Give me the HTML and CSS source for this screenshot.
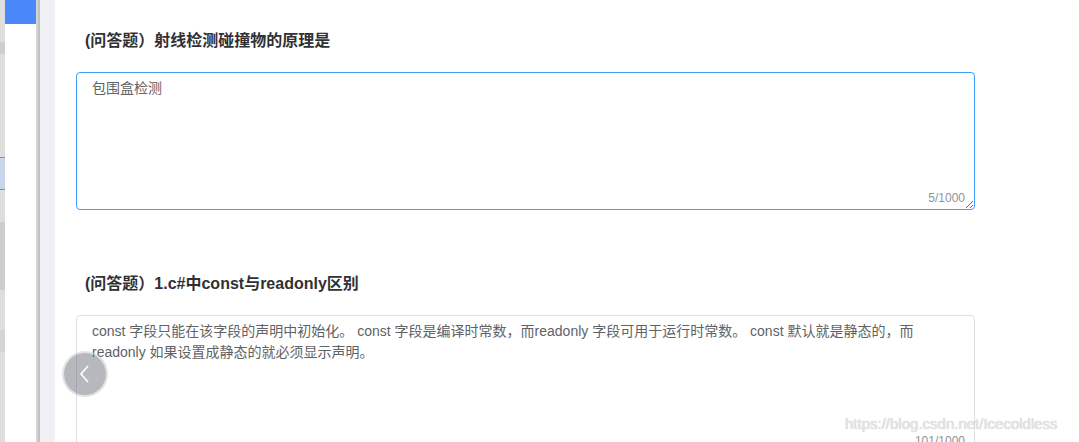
FILE: index.html
```html
<!DOCTYPE html>
<html lang="zh-CN">
<head>
<meta charset="utf-8">
<title>问答题</title>
<link rel="stylesheet" href="styles.css">
</head>
<body>
  <div class="bg-strip">
    <div class="band band-a"></div>
    <div class="band band-b"></div>
    <div class="band band-c"></div>
    <div class="band band-d"></div>
  </div>
  <div class="side"><div class="side-head"></div></div>
  <div class="shade"></div>
  <div class="gutter"></div>
  <main class="main">
    <section class="question">
      <div class="q-title">(问答题）射线检测碰撞物的原理是</div>
      <div class="textarea-wrap">
        <textarea class="answer is-focus">包围盒检测</textarea>
        <span class="count">5/1000</span>
      </div>
    </section>
    <section class="question next">
      <div class="q-title">(问答题）1.c#中const与readonly区别</div>
      <div class="textarea-wrap">
        <textarea class="answer">const 字段只能在该字段的声明中初始化。 const 字段是编译时常数，而readonly 字段可用于运行时常数。 const 默认就是静态的，而readonly 如果设置成静态的就必须显示声明。</textarea>
        <span class="count">101/1000</span>
      </div>
    </section>
    <button class="prev-btn" type="button" aria-label="上一题">
      <svg width="14" height="20" viewBox="0 0 14 20"><path d="M10 2 L3 10 L10 18" fill="none" stroke="#fff" stroke-width="1.6"/></svg>
    </button>
    <div class="watermark">https://blog.csdn.net/Icecoldless</div>
  </main>
</body>
</html>
```

FILE: styles.css
```css
html, body {
  margin: 0;
  padding: 0;
}
body {
  width: 1079px;
  height: 442px;
  overflow: hidden;
  display: flex;
  background: #fff;
  font-family: "Liberation Sans", "Noto Sans CJK SC", Arial, sans-serif;
}
.bg-strip {
  width: 5px;
  flex: none;
  background: #dedede;
  position: relative;
}
.band {
  position: absolute;
  left: 0;
  width: 5px;
}
.band-a { top: 42px; height: 12px; background: #cfcfd3; }
.band-b { top: 157px; height: 33px; background: #c7d6ea; border-top: 1px solid #5d93e8; border-bottom: 1px solid #5d93e8; box-sizing: border-box; }
.band-c { top: 222px; height: 68px; background: #cdcdcd; }
.band-d { top: 330px; height: 22px; background: #d4d4d4; }
.side {
  width: 31px;
  flex: none;
  background: #fff;
}
.side-head {
  height: 24px;
  background: #4a87f8;
}
.shade {
  width: 4px;
  flex: none;
  background: linear-gradient(to right, #dadada, #bcbcbc);
}
.gutter {
  width: 15px;
  flex: none;
  background: #eef0f4;
}
.main {
  flex: 1;
  position: relative;
  padding: 29px 0 0 21px;
  background: #fff;
}
.question.next {
  margin-top: 62px;
}
.q-title {
  font-size: 16px;
  font-weight: bold;
  line-height: 24px;
  color: #303133;
  padding-left: 9px;
  margin-bottom: 19px;
}
.textarea-wrap {
  position: relative;
  width: 899px;
}
.answer {
  display: block;
  box-sizing: border-box;
  width: 899px;
  height: 138px;
  padding: 5px 15px;
  margin: 0;
  font-family: "Liberation Sans", "Noto Sans CJK SC", Arial, sans-serif;
  font-size: 14px;
  line-height: 1.5;
  color: #606266;
  border: 1px solid #dcdfe6;
  border-radius: 4px;
  background: #fff;
  resize: vertical;
  outline: none;
}
.answer.is-focus {
  border-color: #409eff;
}
.count {
  position: absolute;
  right: 10px;
  bottom: 5px;
  font-size: 12px;
  line-height: 14px;
  color: #909399;
  background: #fff;
}
.prev-btn {
  position: absolute;
  left: 9px;
  top: 353px;
  width: 42px;
  height: 42px;
  padding: 0;
  border: none;
  border-radius: 50%;
  background: rgba(110, 113, 124, 0.5);
  box-shadow: 0 0 0 2px rgba(205, 206, 212, 0.6);
  display: flex;
  align-items: center;
  justify-content: center;
}
.watermark {
  position: absolute;
  left: 790px;
  top: 415px;
  font-size: 15px;
  line-height: 18px;
  color: #e6e6e6;
  text-shadow: 0 0 1px #b8b8b8;
  white-space: nowrap;
}
```
